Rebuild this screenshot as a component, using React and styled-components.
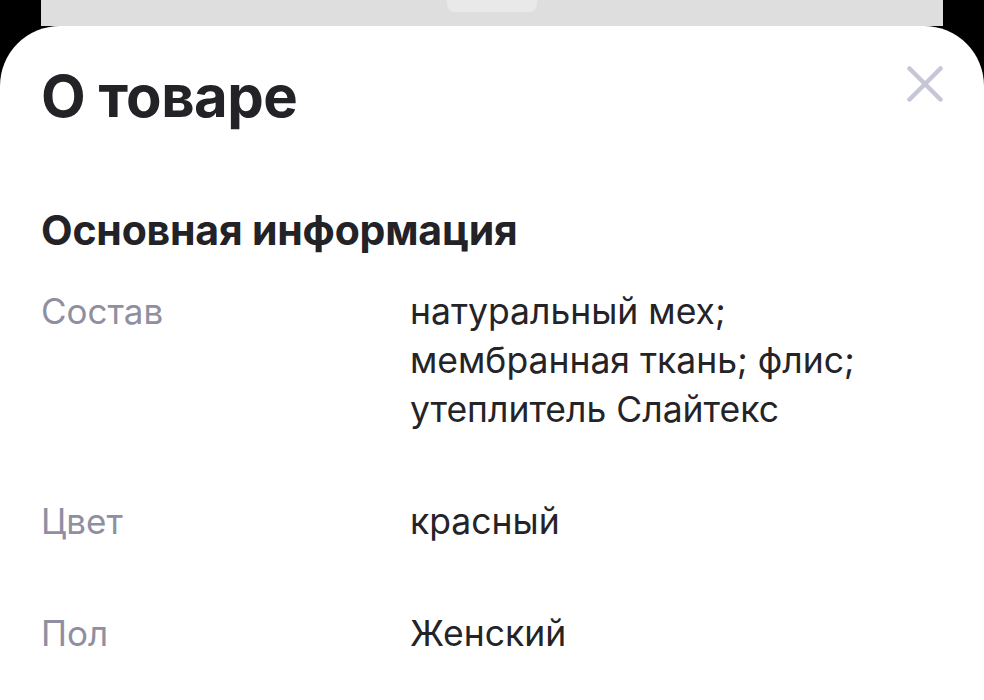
import styled, { createGlobalStyle } from "styled-components";

const GlobalStyle = createGlobalStyle`
  html, body {
    margin: 0;
    padding: 0;
    background: #000;
  }
  body {
    font-family: Inter, "Noto Sans", "Liberation Sans", sans-serif;
    -webkit-font-smoothing: antialiased;
  }
`;

const Screen = styled.div`
  width: 984px;
  height: 700px;
  overflow: hidden;
  background: #000;
  display: flex;
  flex-direction: column;
`;

const BackSheet = styled.div`
  height: 26px;
  margin: 0 41px;
  background: #dedede;
  display: flex;
  justify-content: center;
  flex-shrink: 0;
`;

const Handle = styled.div`
  width: 90px;
  height: 12px;
  background: #e9e9e9;
  border-radius: 0 0 8px 8px;
`;

const Sheet = styled.div`
  flex: 1;
  background: #fff;
  border-radius: 60px 60px 0 0;
  padding: 35px 41px 0 41px;
`;

const Header = styled.div`
  display: flex;
  justify-content: space-between;
  align-items: flex-start;
`;

const Title = styled.h1`
  margin: 0;
  font-size: 58px;
  line-height: 70px;
  font-weight: 700;
  color: #222227;
  letter-spacing: -0.5px;
`;

const CloseButton = styled.button`
  margin-top: 5px;
  padding: 0;
  width: 36px;
  height: 36px;
  border: none;
  background: none;
  cursor: pointer;
  color: #c6c6d8;
`;

const SectionTitle = styled.h2`
  margin: 74px 0 0 0;
  font-size: 41px;
  line-height: 50px;
  font-weight: 700;
  color: #222227;
  letter-spacing: -0.2px;
`;

const Specs = styled.dl`
  margin: 32px 0 0 0;
  display: flex;
  flex-direction: column;
  gap: 63px;
`;

const Row = styled.div`
  display: grid;
  grid-template-columns: 369px 1fr;
`;

const Label = styled.dt`
  margin: 0;
  font-size: 35px;
  line-height: 49px;
  color: #8f8fa1;
`;

const Value = styled.dd`
  margin: 0;
  max-width: 480px;
  font-size: 35.5px;
  line-height: 49px;
  color: #242428;
`;

const specs = [
  {
    label: "Состав",
    value: "натуральный мех; мембранная ткань; флис; утеплитель Слайтекс",
  },
  { label: "Цвет", value: "красный" },
  { label: "Пол", value: "Женский" },
];

const CloseIcon = () => (
  <svg width="36" height="36" viewBox="0 0 36 36" fill="none">
    <path
      d="M2.5 2.5 L33.5 33.5 M33.5 2.5 L2.5 33.5"
      stroke="currentColor"
      strokeWidth="4.5"
      strokeLinecap="round"
    />
  </svg>
);

export default function App() {
  return (
    <Screen>
      <GlobalStyle />
      <BackSheet>
        <Handle />
      </BackSheet>
      <Sheet>
        <Header>
          <Title>О товаре</Title>
          <CloseButton aria-label="Закрыть">
            <CloseIcon />
          </CloseButton>
        </Header>
        <SectionTitle>Основная информация</SectionTitle>
        <Specs>
          {specs.map((s) => (
            <Row key={s.label}>
              <Label>{s.label}</Label>
              <Value>{s.value}</Value>
            </Row>
          ))}
        </Specs>
      </Sheet>
    </Screen>
  );
}
